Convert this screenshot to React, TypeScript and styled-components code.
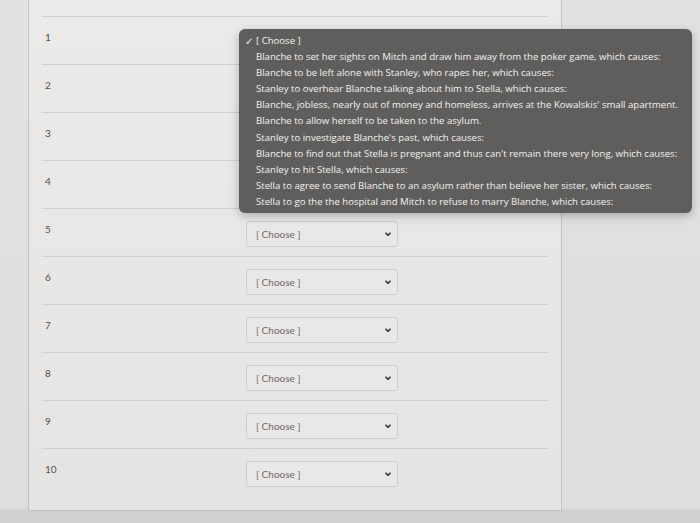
import React from 'react';
import styled, { createGlobalStyle } from 'styled-components';

const GlobalStyle = createGlobalStyle`
  html, body {
    margin: 0;
    padding: 0;
    background: #dfdedc;
  }
  body {
    width: 700px;
    height: 523px;
    overflow: hidden;
  }
`;

const options = [
  'Blanche to set her sights on Mitch and draw him away from the poker game, which causes:',
  'Blanche to be left alone with Stanley, who rapes her, which causes:',
  'Stanley to overhear Blanche talking about him to Stella, which causes:',
  "Blanche, jobless, nearly out of money and homeless, arrives at the Kowalskis' small apartment.",
  'Blanche to allow herself to be taken to the asylum.',
  "Stanley to investigate Blanche's past, which causes:",
  "Blanche to find out that Stella is pregnant and thus can't remain there very long, which causes:",
  'Stanley to hit Stella, which causes:',
  'Stella to agree to send Blanche to an asylum rather than believe her sister, which causes:',
  'Stella to go the the hospital and Mitch to refuse to marry Blanche, which causes:',
];

const Page = styled.div`
  position: relative;
  height: 523px;
  padding-left: 28px;
  box-sizing: border-box;
  background: linear-gradient(to bottom, #e3e2e0 0%, #dfdedc 97%, #d2d0ce 97.7%);
`;

const Panel = styled.div`
  width: 534px;
  height: 511px;
  box-sizing: border-box;
  border: 1px solid #c4c2c0;
  border-top: none;
  background: linear-gradient(to bottom, #ebeae9, #e6e4e2);
  padding: 16px 13px 0 13px;
`;

const Row = styled.div`
  display: flex;
  align-items: flex-start;
  height: 48px;
  border-top: 1px solid #d2d0ce;
  box-sizing: border-box;
`;

const Num = styled.div`
  width: 204px;
  box-sizing: border-box;
  padding: 14px 0 0 3px;
  font-family: Lato, 'Liberation Sans', sans-serif;
  font-size: 10px;
  line-height: 12px;
  color: #4e4d4b;
`;

const Select = styled.div<{ $covered?: boolean }>`
  margin-top: 12px;
  width: 152px;
  height: 26px;
  box-sizing: border-box;
  border: 1px solid #cfcdcb;
  border-radius: 3px;
  background: #eae8e6;
  display: flex;
  align-items: center;
  justify-content: space-between;
  padding: 0 5px 0 9px;
  font-family: Lato, 'Liberation Sans', sans-serif;
  font-size: 10px;
  color: #6a6866;
  visibility: ${p => (p.$covered ? 'hidden' : 'visible')};
`;

const Chevron = styled.svg`
  width: 8px;
  height: 8px;
`;

const Menu = styled.div`
  position: absolute;
  left: 239px;
  top: 29px;
  width: 453px;
  height: 184px;
  box-sizing: border-box;
  padding: 4px 0 4px 6px;
  background: #5f5e5c;
  border-radius: 6px;
  box-shadow: 0 3px 10px rgba(0, 0, 0, 0.25);
  font-family: 'Open Sans', 'Liberation Sans', sans-serif;
  font-size: 9.6px;
  color: #f3f2f0;
`;

const Item = styled.div`
  display: flex;
  height: 16.1px;
  line-height: 16px;
  white-space: nowrap;
`;

const Check = styled.span`
  width: 11px;
  flex: none;
  font-size: 10px;
`;

export default function App() {
  const rows = Array.from({ length: 10 }, (_, i) => i + 1);
  return (
    <Page>
      <GlobalStyle />
      <Panel>
        {rows.map(n => (
          <Row key={n}>
            <Num>{n}</Num>
            <Select $covered={n <= 4}>
              <span>[ Choose ]</span>
              <Chevron viewBox="0 0 8 8">
                <path d="M1.5 2.8 L4 5.3 L6.5 2.8" fill="none" stroke="#3a3938" strokeWidth="1.6" />
              </Chevron>
            </Select>
          </Row>
        ))}
      </Panel>
      <Menu>
        <Item>
          <Check>✓</Check>
          <span>[ Choose ]</span>
        </Item>
        {options.map(o => (
          <Item key={o}>
            <Check />
            <span>{o}</span>
          </Item>
        ))}
      </Menu>
    </Page>
  );
}
